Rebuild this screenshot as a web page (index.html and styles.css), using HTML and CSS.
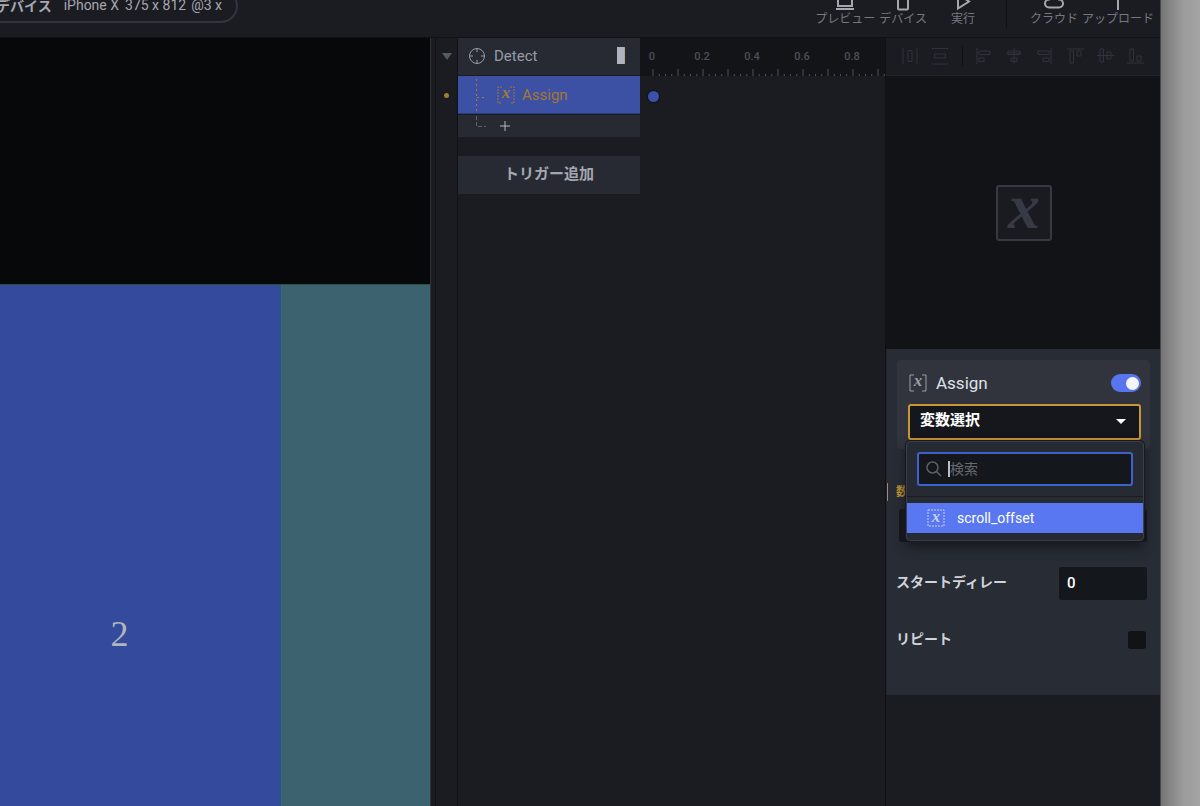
FILE: index.html
```
<!DOCTYPE html>
<html lang="ja">
<head>
<meta charset="utf-8">
<title>Prototype editor</title>
<link rel="stylesheet" href="styles.css">
</head>
<body>
<div class="app">
  <header class="topbar">
    <div class="device"><b>デバイス</b><span>iPhone X</span><span class="size">375 x 812</span><span>@3 x</span></div>
    <nav class="tools">
      <button class="tool"><svg width="20" height="20" viewBox="0 0 20 20"><rect x="3" y="3" width="14" height="12"/><path d="M1 18h18"/></svg>プレビュー</button>
      <button class="tool"><svg width="20" height="20" viewBox="0 0 20 20"><rect x="5" y="1" width="10" height="17.500" rx="1"/></svg>デバイス</button>
      <button class="tool run"><svg width="20" height="20" viewBox="0 0 20 20"><path d="M5 3l11 7.500-11 7z"/></svg>実行</button>
      <span class="rule"></span>
      <button class="tool cloud"><svg width="20" height="20" viewBox="0 0 20 20"><path d="M5 16.500h10a4 4 0 0 0 4-4 4 4 0 0 0-4-4 5 5 0 0 0-10 0 4 4 0 0 0-4 4 4 4 0 0 0 4 4z"/></svg>クラウド</button>
      <button class="tool"><svg width="20" height="20" viewBox="0 0 20 20"><path d="M10 19V2M5 7l5-5 5 5"/></svg>アップロード</button>
    </nav>
  </header>
  <main class="main">
    <section class="canvas">
      <div class="void"></div>
      <div class="pages"><div class="page two">2</div><div class="page next"></div></div>
    </section>
    <div class="gutter">
      <svg class="fold" width="10" height="7"><path d="M0 0h10l-5 7z"/></svg>
      <i class="dot"></i>
    </div>
    <section class="triggers">
      <div class="trigger">
        <svg class="target" width="18" height="18" viewBox="0 0 18 18"><circle cx="9" cy="9" r="7.500"/><path d="M9 1v4M9 13v4M1 9h4M13 9h4"/></svg>
        <span>Detect</span>
        <i class="layer"></i>
      </div>
      <button class="response">
        <svg width="12" height="36" viewBox="0 0 12 36"><path d="M1.500 2v34M2 20.500h9" stroke-dasharray="2 3"/></svg>
        <svg class="var" width="18" height="18" viewBox="0 0 18 18"><path d="M5 1H1v16h4M13 1h4v16h-4"/><text x="9" y="12">x</text></svg>
        Assign
      </button>
      <button class="add" aria-label="Add response">
        <svg width="12" height="21" viewBox="0 0 12 21"><path d="M1.500 0v10.500H11" stroke-dasharray="4 2"/></svg>
        <svg class="plus" width="10" height="10" viewBox="0 0 10 10"><path d="M5 0v10M0 5h10"/></svg>
      </button>
      <button class="newtrigger">トリガー追加</button>
    </section>
    <section class="timeline">
      <div class="ruler">
        <div class="labels"><span>0</span><span>0.2</span><span>0.4</span><span>0.6</span><span>0.8</span></div>
        <svg class="ticks" width="100%" height="8"><defs><pattern id="ticks" x="12" width="25" height="8" patternUnits="userSpaceOnUse"><path d="M1 0v8M7.250 5v3M13.500 5v3M19.750 5v3"/></pattern></defs><rect x="12" width="100%" height="8" fill="url(#ticks)"/></svg>
      </div>
      <i class="key"></i>
    </section>
    <aside class="inspector">
      <div class="align">
        <button aria-label="Distribute horizontally"><svg width="18" height="18" viewBox="0 0 18 18"><path d="M2 1v16M16 1v16M7 3.500h4v11H7z"/></svg></button>
        <button aria-label="Distribute vertically"><svg width="18" height="18" viewBox="0 0 18 18"><path d="M1 1.500h16M1 17h16M3.500 7h11v4h-11z"/></svg></button>
        <span class="rule"></span>
        <button aria-label="Align left"><svg width="18" height="18" viewBox="0 0 18 18"><path d="M2 1v16M4 4h11v3.500H4zM4 11h5v3.500H4z"/></svg></button>
        <button aria-label="Align center"><svg width="18" height="18" viewBox="0 0 18 18"><path d="M9 1v16M2 6h14M3 4h12v3.500H3zM6 11h6v3.500H6z"/></svg></button>
        <button aria-label="Align right"><svg width="18" height="18" viewBox="0 0 18 18"><path d="M16 1v16M3 4h11v3.500H3zM8 11h6v3.500H8z"/></svg></button>
        <button aria-label="Align top"><svg width="18" height="18" viewBox="0 0 18 18"><path d="M1 2h17M4 4h3.500v12H4zM11 4h4v5h-4z"/></svg></button>
        <button aria-label="Align middle"><svg width="18" height="18" viewBox="0 0 18 18"><path d="M1 8.500h17M4 2h3.500v13H4zM11 5h4v7h-4z"/></svg></button>
        <button aria-label="Align bottom"><svg width="18" height="18" viewBox="0 0 18 18"><path d="M1 16h17M4 2h3.500v12H4zM11 9h4v5h-4z"/></svg></button>
      </div>
      <div class="preview">
        <svg width="56" height="56" viewBox="0 0 56 56"><rect x="1" y="1" width="54" height="54" rx="2"/><text x="28" y="43">x</text></svg>
      </div>
      <div class="props">
        <div class="card">
          <div class="cardhead">
            <svg class="var" width="18" height="18" viewBox="0 0 18 18"><path d="M5 1H1v16h4M13 1h4v16h-4"/><text x="9" y="12">x</text></svg>
            <label for="enabled">Assign</label>
            <input class="switch" id="enabled" type="checkbox" checked>
          </div>
          <div class="pick">
            <select class="variable" aria-label="変数選択"><option>変数選択</option></select>
            <svg class="arrow" width="10" height="5"><path d="M0 0h10l-5 5z"/></svg>
            <div class="menu">
              <div class="search">
                <svg width="16" height="16" viewBox="0 0 16 16"><circle cx="6.500" cy="6.500" r="5.500"/><path d="M10.500 10.500l4.500 4.500"/></svg>
                <i class="caret"></i>
                <input type="text" placeholder="検索" aria-label="検索">
              </div>
              <button class="item"><svg class="var" width="18" height="18" viewBox="0 0 18 18"><rect x="1" y="1" width="16" height="16" stroke-dasharray="2 1"/><text x="9" y="13">x</text></svg>scroll_offset</button>
            </div>
          </div>
        </div>
        <div class="formula"><label for="value">数</label><input id="value" class="field" type="text"></div>
        <div class="row"><label for="delay">スタートディレー</label><input id="delay" class="field number" type="text" value="0"></div>
        <div class="row repeat"><label for="repeat">リピート</label><input id="repeat" class="check" type="checkbox"></div>
      </div>
    </aside>
  </main>
</div>
</body>
</html>
```
FILE: styles.css
```
* { box-sizing: border-box; }
body {
  margin: 0;
  min-height: 100vh;
  display: flex;
  padding-right: 39px;
  overflow-x: hidden;
  background: linear-gradient(to left, #a4a4a4 0, #9c9c9c 16px, #747474 40px);
  font-family: Roboto, "Noto Sans CJK JP", sans-serif;
  font-size: 14px;
  color: #a4a7b1;
}
button, input, select { font: inherit; color: inherit; margin: 0; border: 0; padding: 0; background: none; border-radius: 0; }
svg { display: block; flex: none; fill: none; stroke: currentColor; }
.app { flex: 1; min-width: 0; display: flex; flex-direction: column; background: #1b1c21; border-right: 1px solid #454750; }

.topbar {
  height: 38px;
  flex: none;
  display: flex;
  align-items: flex-end;
  justify-content: space-between;
  overflow: hidden;
  border-bottom: 1px solid #101115;
}
.device {
  display: flex;
  align-items: center;
  height: 34px;
  width: 238px;
  margin-bottom: 14px;
  padding: 0 14px 2px 0;
  justify-content: flex-end;
  border: 2px solid #303541;
  border-left: 0;
  border-radius: 0 17px 17px 0;
  white-space: nowrap;
}
.device b { margin-right: 12px; }
.device .size { margin: 0 5px 0 6px; }
.tools { display: flex; align-items: flex-end; padding: 0 6px 9px 0; gap: 4px; color: #747882; font-size: 12px; }
.tool { display: flex; flex-direction: column; align-items: center; line-height: 18px; white-space: nowrap; }
.tool svg { color: #a5a7ae; margin-bottom: -1px; stroke-width: 2; }
.run { margin: 0 27px 0 20px; }
.rule { width: 1px; background: #101115; }
.tools .rule { height: 30px; }
.cloud { margin-left: 19px; }

.main { flex: 1; display: flex; min-height: 0; }
.canvas { flex: 1; min-width: 0; display: flex; flex-direction: column; border-right: 1px solid #303238; }
.void { height: 246px; background: #07080a; }
.pages { flex: 1; display: grid; grid-template-columns: 281fr 149fr; border-top: 1px solid #30503f; }
.page.two {
  padding: 328px 42px 0 0;
  background: #344a9d;
  color: #b3b5bb;
  font: 36px/42px "Liberation Serif", serif;
  text-align: center;
}
.page.next { background: #3c6270; border-left: 1px solid #2f7359; }
.gutter {
  width: 27px;
  display: flex;
  flex-direction: column;
  align-items: center;
  gap: 33px;
  padding: 15px 0 0 5px;
  border-right: 1px solid #111216;
  background: linear-gradient(to right, #1b1c21 4px, #111216 4px, #111216 5px, #1b1c21 5px);
}
.fold path { fill: #525b60; stroke: none; }
.dot { width: 5px; height: 5px; border-radius: 50%; background: #a77c30; }

.triggers { width: 182px; display: flex; flex-direction: column; }
.trigger { height: 37px; display: flex; align-items: center; gap: 8px; padding: 0 15px 2px 10px; background: #272a32; font-size: 15px; color: #969ba5; }
.layer { width: 8px; height: 17px; margin-left: auto; background: #b0b2bd; border-right: 1px dotted #b89c6b; }
.response {
  height: 38px;
  margin-top: 1px;
  display: flex;
  align-items: center;
  padding: 0 0 0 17px;
  background: #3c51a4;
  border-bottom: 1px solid #2d3c78;
  color: #a37735;
  font-size: 15px;
}
.response .var { margin: 0 7px 0 10px; }
.var text { font: italic bold 17px "Liberation Serif", serif; text-anchor: middle; fill: currentColor; stroke: none; }
.var path { stroke-dasharray: 2 1; }
.add { height: 22px; margin-top: 1px; display: flex; align-items: center; gap: 13px; padding-left: 17px; background: #272a32; color: #60636c; }
.plus { color: #b4b7c1; }
.newtrigger { height: 38px; margin-top: 19px; background: #272a32; font-weight: bold; font-size: 15px; padding-bottom: 5px; }

.timeline { width: 246px; border-right: 1px solid #101115; }
.ruler { height: 38px; overflow: hidden; background: #131418; color: #4c4f59; font-size: 11px; font-weight: 500; }
.ticks rect { stroke: none; }
.labels { display: flex; width: 250px; margin-left: -13px; line-height: 14px; padding: 12px 0 5px; }
.labels span { flex: 1; text-align: center; }
.key { display: block; width: 11px; height: 11px; margin: 15px 0 0 8px; border-radius: 50%; background: #3b51a8; box-shadow: 0 0 0 1px #101115; }

.inspector { width: 274px; display: flex; flex-direction: column; }
.align { height: 38px; display: flex; align-items: center; justify-content: space-between; padding: 0 16px 2px 15px; color: #2f333d; border-bottom: 1px solid #212328; }
.align .rule { height: 20px; }
.preview { height: 273px; display: flex; align-items: center; justify-content: center; padding-left: 2px; background: #121317; color: #363a45; }
.preview svg { stroke-width: 2; }
.preview rect { fill: #191b20; }
.preview text { font: italic bold 64px "Liberation Serif", serif; text-anchor: middle; fill: currentColor; stroke: none; }
.props { height: 346px; padding: 11px 10px 0; background: #282c35; border-left: 1px solid #22252c; color: #d0d3da; }
.card { height: 89px; padding: 12px 9px 0 12px; margin-bottom: 34px; border-radius: 4px; background: #31343d; }
.cardhead { display: flex; align-items: center; height: 22px; gap: 9px; font-size: 17px; color: #dfe1e8; }
.cardhead .var { color: #9a9ea6; }
.cardhead .var path { stroke-dasharray: none; }
.switch { appearance: none; display: flex; justify-content: flex-end; align-items: center; width: 30px; height: 18px; margin-left: auto; padding-right: 2px; border-radius: 9px; background: #5675ee; }
.switch::before { content: ""; width: 13px; height: 13px; border-radius: 50%; background: #f4f6fc; }
.pick { position: relative; margin: 10px 0 0 -1px; }
.variable {
  appearance: none;
  display: block;
  width: 100%;
  height: 36px;
  padding: 0 30px 4px 10px;
  border: 2px solid #c89634;
  border-radius: 3px;
  background: #15171c;
  color: #fff;
  font-size: 15px;
  font-weight: bold;
}
.arrow { position: absolute; right: 15px; top: 15px; }
.arrow path { fill: #fff; stroke: none; }
.menu {
  position: absolute;
  z-index: 1;
  top: 37px;
  left: -2px;
  right: -3px;
  padding-bottom: 7px;
  border: 1px solid #3a3e4a;
  border-radius: 4px;
  background: #262a33;
  box-shadow: 0 0 0 1px #181a1f, 0 6px 12px #16181d;
}
.search { display: flex; align-items: center; height: 34px; margin: 10px 10px 17px; padding: 0 9px; border: 2px solid #3f61cc; border-radius: 3px; background: #14171b; color: #5d6067; }
.search svg { stroke-width: 1.5; margin-left: -2px; }
.caret { width: 2px; height: 16px; margin-left: 6px; background: #b9bdcc; }
.search input { min-width: 0; flex: 1; outline: 0; }
.search input::placeholder { color: #666970; opacity: 1; }
.item { display: flex; align-items: center; gap: 12px; width: 100%; height: 30px; padding: 0 0 0 20px; background: #5877f0; color: #fff; box-shadow: 0 -6px 0 #262a33, 0 -7px 0 #1a1c21; }
.item .var { color: #c6d0f5; }
.formula { position: relative; margin: 0 3px 24px 2px; color: #c89634; font-size: 12px; font-weight: bold; line-height: 18px; }
.formula label { display: block; margin: 0 0 8px -12px; padding-left: 8px; border-left: 1px solid #9a8c78; }
.field { display: block; height: 33px; width: 100%; border-radius: 3px; background: #14171b; }
.row { display: flex; justify-content: space-between; align-items: center; height: 34px; margin: 0 3px 0 -1px; font-size: 14px; font-weight: 500; }
.row label { padding-bottom: 4px; font-weight: bold; }
.number { width: 88px; padding: 0 8px; font-size: 15px; color: #fff; }
.repeat { margin-top: 23px; }
.check { appearance: none; width: 18px; height: 18px; margin-right: 1px; border-radius: 3px; background: #111316; }
```
